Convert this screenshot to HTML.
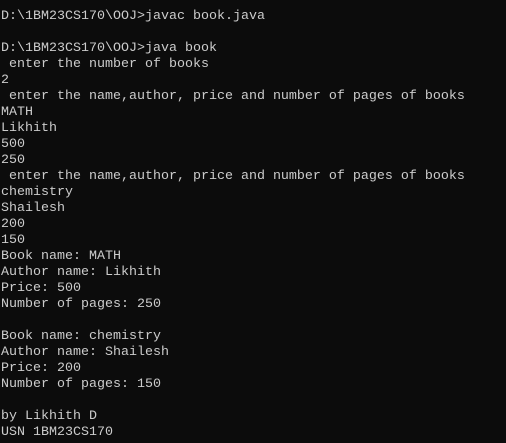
<!DOCTYPE html>
<html><head><style>
html,body{margin:0;padding:0;background:#0c0c0c;width:506px;height:443px;overflow:hidden}
pre{margin:0;padding:9px 0 0 1px;font-family:"Liberation Mono",monospace;font-size:13.333px;line-height:16px;color:#cccccc;white-space:pre}
</style></head><body><pre>D:\1BM23CS170\OOJ>javac book.java

D:\1BM23CS170\OOJ>java book
 enter the number of books
2
 enter the name,author, price and number of pages of books
MATH
Likhith
500
250
 enter the name,author, price and number of pages of books
chemistry
Shailesh
200
150
Book name: MATH
Author name: Likhith
Price: 500
Number of pages: 250

Book name: chemistry
Author name: Shailesh
Price: 200
Number of pages: 150

by Likhith D
USN 1BM23CS170</pre></body></html>
